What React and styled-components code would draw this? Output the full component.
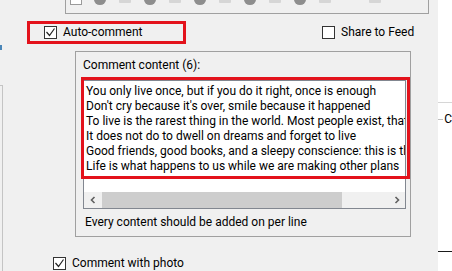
import React from 'react';
import styled, { createGlobalStyle } from 'styled-components';

const GlobalStyle = createGlobalStyle`
  body {
    margin: 0;
    background: #f0f0f0;
    font-family: Roboto, "Liberation Sans", sans-serif;
    font-size: 12px;
    color: #000;
  }
`;

const quotes = [
  'You only live once, but if you do it right, once is enough',
  "Don't cry because it's over, smile because it happened",
  'To live is the rarest thing in the world. Most people exist, that is all',
  'It does not do to dwell on dreams and forget to live',
  'Good friends, good books, and a sleepy conscience: this is the ideal life',
  'Life is what happens to us while we are making other plans',
];

const toolShapes = ['circle', 'rect', 'circle', 'rect', 'circle', 'rect', 'circle', 'rect', 'circle', 'rect', 'gap', 'rect'];

const Window = styled.div`
  width: 452px;
  height: 271px;
  overflow: hidden;
  display: flex;
  background: #f0f0f0;
  line-height: 15px;
`;

const Main = styled.div`
  width: 441px;
  display: flex;
`;

const LeftEdge = styled.div`
  width: 3px;
  display: flex;
  flex-direction: column;
`;

const EdgeMark = styled.div`
  margin-top: 45px;
  width: 2px;
  height: 5px;
  background: #4a86b8;
`;

const EdgeBox = styled.div`
  margin-top: 35px;
  flex: 1;
  width: 2px;
  border-top: 1px solid #c4c4c4;
  border-right: 1px solid #c4c4c4;
`;

const Body = styled.div`
  flex: 1;
  display: flex;
  flex-direction: column;
`;

const TopGroup = styled.div`
  box-sizing: border-box;
  margin-left: 62px;
  width: 364px;
  height: 14px;
  border: 1px solid #a0a0a0;
  border-top: none;
  overflow: hidden;
  display: flex;
  align-items: flex-start;
  padding-left: 4px;
`;

const ToolBox = styled.span`
  margin-top: -7px;
  width: 10px;
  height: 10px;
  border: 1px solid #9a9a9a;
  background: #fff;
  margin-right: 12px;
`;

const ToolShape = styled.span`
  flex: none;
  margin-top: -6px;
  width: 12px;
  height: ${(p) => (p.$kind === 'rect' ? 9 : 11)}px;
  margin-right: 13px;
  border-radius: ${(p) => (p.$kind === 'circle' ? '50%' : '1px')};
  background: ${(p) => (p.$kind === 'circle' ? '#8e8e8e' : p.$kind === 'rect' ? '#d6d6d6' : 'transparent')};
`;

const OptionsRow = styled.div`
  margin-top: 7px;
  display: flex;
  align-items: center;
`;

const Highlight = styled.div`
  box-sizing: border-box;
  margin-left: 24px;
  width: 159px;
  height: 23px;
  border: 3px solid #e3121b;
  padding-left: 14px;
  display: flex;
  align-items: center;
`;

const CheckLabel = styled.label`
  display: flex;
  align-items: center;
  gap: 6px;
  margin-left: ${(p) => p.$left || 0}px;
  margin-right: ${(p) => p.$right || 0}px;
  white-space: nowrap;
`;

const Box = styled.span`
  box-sizing: border-box;
  flex: none;
  width: 13px;
  height: 13px;
  border: 1px solid #333;
  background: #fff;
  display: flex;

  svg {
    display: block;
  }
`;

const GroupBox = styled.div`
  box-sizing: border-box;
  margin-left: 72px;
  margin-top: 7px;
  width: 336px;
  height: 191px;
  border: 1px solid #a0a0a0;
  padding: 6px 0 0 7px;
  display: flex;
  flex-direction: column;
`;

const TextBox = styled.div`
  position: relative;
  margin-top: 7px;
  box-sizing: border-box;
  width: 323px;
  height: 129px;
  border: 1px solid #828790;
  background: #fff;
  display: flex;
  flex-direction: column;
`;

const Lines = styled.div`
  height: 111px;
  padding: 3px 0 0 2px;
  box-sizing: border-box;
  overflow: hidden;
  white-space: pre;
`;

const RedFrame = styled.div`
  position: absolute;
  left: -3px;
  top: -4px;
  width: 329px;
  height: 102px;
  box-sizing: border-box;
  border: 3px solid #e3121b;
  pointer-events: none;
`;

const HScroll = styled.div`
  height: 16px;
  display: flex;
  background: #f0f0f0;
`;

const ArrowBtn = styled.div`
  width: 17px;
  display: flex;
  align-items: center;
  justify-content: center;
`;

const Track = styled.div`
  flex: 1;
  display: flex;
`;

const Thumb = styled.div`
  margin-left: 1px;
  width: 240px;
  background: #cdcdcd;
`;

const Hint = styled.div`
  margin-top: 6px;
  margin-left: 2px;
`;

const BottomRow = styled.div`
  margin-top: 19px;
  display: flex;
`;

const SidePanel = styled.div`
  flex: 1;
  background: #fff;
  display: flex;
  flex-direction: column;
`;

const Separator = styled.div`
  margin-top: 102px;
  height: 1px;
  background: #d6d6d6;
`;

const SideLegend = styled.div`
  margin-top: 9px;
  display: flex;
  align-items: center;
  gap: 1px;
  white-space: nowrap;

  &::before {
    content: '';
    width: 5px;
    height: 1px;
    background: #bdbdbd;
  }
`;

const SideRule = styled.div`
  margin-top: 124px;
  height: 1px;
  background: #1a1a1a;
`;

function CheckBox({ checked }) {
  return (
    <Box>
      {checked && (
        <svg width="11" height="11" viewBox="0 0 11 11">
          <polyline points="1.5,5 4.5,8.5 9.5,1.5" fill="none" stroke="#222" strokeWidth="1.2" />
        </svg>
      )}
    </Box>
  );
}

function Chevron({ dir }) {
  const pts = dir === 'left' ? '4.5,1 1.5,4 4.5,7' : '1.5,1 4.5,4 1.5,7';
  return (
    <svg width="6" height="8" viewBox="0 0 6 8">
      <polyline points={pts} fill="none" stroke="#606060" strokeWidth="1.6" />
    </svg>
  );
}

export default function App() {
  return (
    <Window>
      <GlobalStyle />
      <Main>
        <LeftEdge>
          <EdgeMark />
          <EdgeBox />
        </LeftEdge>
        <Body>
          <TopGroup>
            <ToolBox />
            {toolShapes.map((kind, i) => (
              <ToolShape key={i} $kind={kind} />
            ))}
          </TopGroup>

          <OptionsRow>
            <Highlight>
              <CheckLabel>
                <CheckBox checked />
                Auto-comment
              </CheckLabel>
            </Highlight>
            <CheckLabel $left={136}>
              <CheckBox />
              Share to Feed
            </CheckLabel>
          </OptionsRow>

          <GroupBox>
            <div>Comment content (6):</div>
            <TextBox>
              <Lines>{quotes.join('\n')}</Lines>
              <HScroll>
                <ArrowBtn>
                  <Chevron dir="left" />
                </ArrowBtn>
                <Track>
                  <Thumb />
                </Track>
                <ArrowBtn>
                  <Chevron dir="right" />
                </ArrowBtn>
              </HScroll>
              <RedFrame />
            </TextBox>
            <Hint>Every content should be added on per line</Hint>
          </GroupBox>

          <BottomRow>
            <CheckLabel $left={50}>
              <CheckBox checked />
              Comment with photo
            </CheckLabel>
          </BottomRow>
        </Body>
      </Main>
      <SidePanel>
        <Separator />
        <SideLegend>C</SideLegend>
        <SideRule />
      </SidePanel>
    </Window>
  );
}
